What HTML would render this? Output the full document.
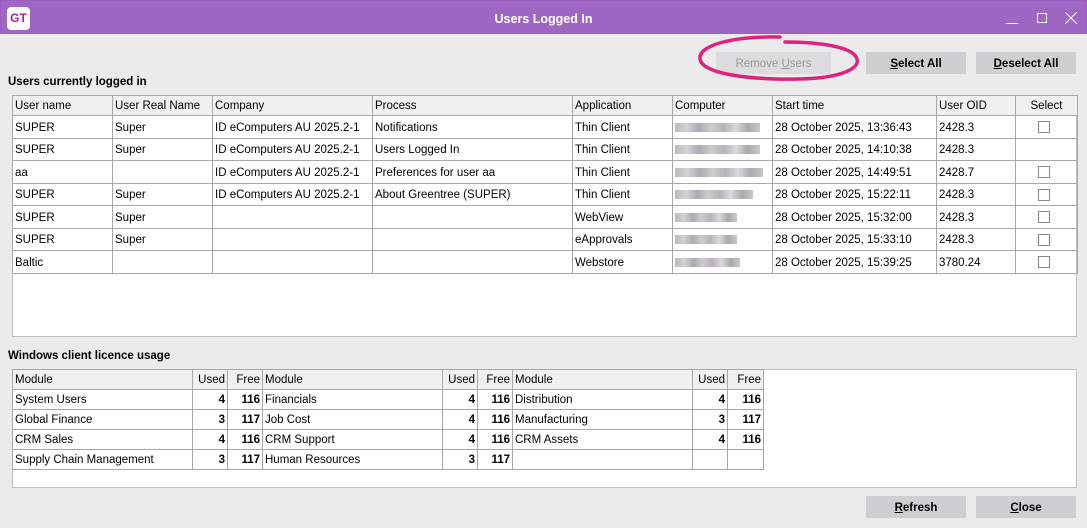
<!DOCTYPE html>
<html><head><style>
*{margin:0;padding:0;box-sizing:border-box}
body{width:1087px;height:528px;background:#ebebeb;font-family:"Liberation Sans",sans-serif;font-size:11.5px;color:#000;position:relative;overflow:hidden}
.title{position:absolute;left:0;top:0;width:1087px;height:34px;background:#a066c4;border:1px solid #9a5fc0}
.title .t{position:absolute;left:0;width:100%;top:11px;text-align:center;color:#fff;font-weight:bold;font-size:12.5px}
.logo{position:absolute;left:6px;top:6px;width:23px;height:23px;background:#fff;border-radius:4px;color:#b0189a;font-weight:bold;font-size:12px;text-align:center;line-height:23px}
.btn{position:absolute;height:22px;background:#cfcfd2;text-align:center;line-height:24px;font-weight:bold;font-size:11.5px}
.lbl{position:absolute;font-weight:bold;font-size:11.5px}
.box{position:absolute;background:#fff;border:1px solid #c0c0c0}
table{border-collapse:collapse;table-layout:fixed;position:absolute;left:-1px;top:-1px}
td{border:1px solid #a8a8a8;padding:1px 2px 0;white-space:nowrap;overflow:hidden}
tr.h td{background:#f0f0f0}
.r{text-align:right}.b{font-weight:bold}.c{text-align:center}
.blur{display:inline-block;height:9px;width:85px;vertical-align:middle;background:linear-gradient(90deg,#bbb,#d5d0d5,#a9acb3,#ccc,#b8b3b8,#d8d8e0,#aaa,#c8c8c8)}
.cb{display:inline-block;width:12px;height:12px;border:1px solid #888;background:#fff;vertical-align:middle;margin-right:6px}
</style></head><body>
<div class="title"><div class="logo">GT</div><div class="t">Users Logged In</div>
<div style="position:absolute;left:1005px;top:22px;width:12px;height:1px;background:#fff"></div>
<div style="position:absolute;left:1036px;top:12px;width:10px;height:10px;border:1px solid #fff"></div>
<svg style="position:absolute;left:1064px;top:11px" width="12" height="12"><path d="M0 0L12 12M12 0L0 12" stroke="#fff" stroke-width="1"/></svg>
</div>
<div class="btn" style="left:716px;top:52px;width:115px;background:#dcdcde;color:#999;font-weight:normal">Remove <u>U</u>sers</div>
<svg style="position:absolute;left:690px;top:34px" width="175" height="52"><path d="M90 3C40 2 8 12 10 25C12 40 60 46 110 45C150 44 170 35 167 25C164 13 130 8 95 8" fill="none" stroke="#e0217e" stroke-width="3.5" stroke-linecap="round"/></svg>
<div class="btn" style="left:866px;top:52px;width:100px"><u>S</u>elect All</div>
<div class="btn" style="left:976px;top:52px;width:100px"><u>D</u>eselect All</div>
<div class="lbl" style="left:8px;top:76px">Users currently logged in</div>
<div class="box" style="left:12px;top:95px;width:1065px;height:242px">
<table style="width:1065px">
<colgroup><col style="width:100px"><col style="width:100px"><col style="width:160px"><col style="width:200px"><col style="width:100px"><col style="width:100px"><col style="width:164px"><col style="width:79px"><col style="width:62px"></colgroup>
<tr class="h" style="height:20px"><td>User name</td><td>User Real Name</td><td>Company</td><td>Process</td><td>Application</td><td>Computer</td><td>Start time</td><td>User OID</td><td class="c">Select</td></tr>
<tr style="height:23px"><td>SUPER</td><td>Super</td><td>ID eComputers AU 2025.2-1</td><td>Notifications</td><td>Thin Client</td><td><span class="blur"></span></td><td>28 October 2025, 13:36:43</td><td>2428.3</td><td class="c"><span class="cb"></span></td></tr>
<tr style="height:22px"><td>SUPER</td><td>Super</td><td>ID eComputers AU 2025.2-1</td><td>Users Logged In</td><td>Thin Client</td><td><span class="blur"></span></td><td>28 October 2025, 14:10:38</td><td>2428.3</td><td></td></tr>
<tr style="height:23px"><td>aa</td><td></td><td>ID eComputers AU 2025.2-1</td><td>Preferences for user aa</td><td>Thin Client</td><td><span class="blur" style="width:88px"></span></td><td>28 October 2025, 14:49:51</td><td>2428.7</td><td class="c"><span class="cb"></span></td></tr>
<tr style="height:22px"><td>SUPER</td><td>Super</td><td>ID eComputers AU 2025.2-1</td><td>About Greentree (SUPER)</td><td>Thin Client</td><td><span class="blur" style="width:78px"></span></td><td>28 October 2025, 15:22:11</td><td>2428.3</td><td class="c"><span class="cb"></span></td></tr>
<tr style="height:23px"><td>SUPER</td><td>Super</td><td></td><td></td><td>WebView</td><td><span class="blur" style="width:62px"></span></td><td>28 October 2025, 15:32:00</td><td>2428.3</td><td class="c"><span class="cb"></span></td></tr>
<tr style="height:22px"><td>SUPER</td><td>Super</td><td></td><td></td><td>eApprovals</td><td><span class="blur" style="width:62px"></span></td><td>28 October 2025, 15:33:10</td><td>2428.3</td><td class="c"><span class="cb"></span></td></tr>
<tr style="height:23px"><td>Baltic</td><td></td><td></td><td></td><td>Webstore</td><td><span class="blur" style="width:65px"></span></td><td>28 October 2025, 15:39:25</td><td>3780.24</td><td class="c"><span class="cb"></span></td></tr>
</table></div>
<div class="lbl" style="left:8px;top:350px">Windows client licence usage</div>
<div class="box" style="left:12px;top:369px;width:1065px;height:119px">
<table style="width:751px">
<colgroup><col style="width:180px"><col style="width:35px"><col style="width:35px"><col style="width:180px"><col style="width:35px"><col style="width:35px"><col style="width:180px"><col style="width:35px"><col style="width:36px"></colgroup>
<tr class="h" style="height:20px"><td>Module</td><td class="r">Used</td><td class="r">Free</td><td>Module</td><td class="r">Used</td><td class="r">Free</td><td>Module</td><td class="r">Used</td><td class="r">Free</td></tr>
<tr style="height:20px"><td>System Users</td><td class="r b">4</td><td class="r b">116</td><td>Financials</td><td class="r b">4</td><td class="r b">116</td><td>Distribution</td><td class="r b">4</td><td class="r b">116</td></tr>
<tr style="height:20px"><td>Global Finance</td><td class="r b">3</td><td class="r b">117</td><td>Job Cost</td><td class="r b">4</td><td class="r b">116</td><td>Manufacturing</td><td class="r b">3</td><td class="r b">117</td></tr>
<tr style="height:20px"><td>CRM Sales</td><td class="r b">4</td><td class="r b">116</td><td>CRM Support</td><td class="r b">4</td><td class="r b">116</td><td>CRM Assets</td><td class="r b">4</td><td class="r b">116</td></tr>
<tr style="height:20px"><td>Supply Chain Management</td><td class="r b">3</td><td class="r b">117</td><td>Human Resources</td><td class="r b">3</td><td class="r b">117</td><td></td><td></td><td></td></tr>
</table></div>
<div class="btn" style="left:866px;top:496px;width:100px"><u>R</u>efresh</div>
<div class="btn" style="left:976px;top:496px;width:100px"><u>C</u>lose</div>
</body></html>
